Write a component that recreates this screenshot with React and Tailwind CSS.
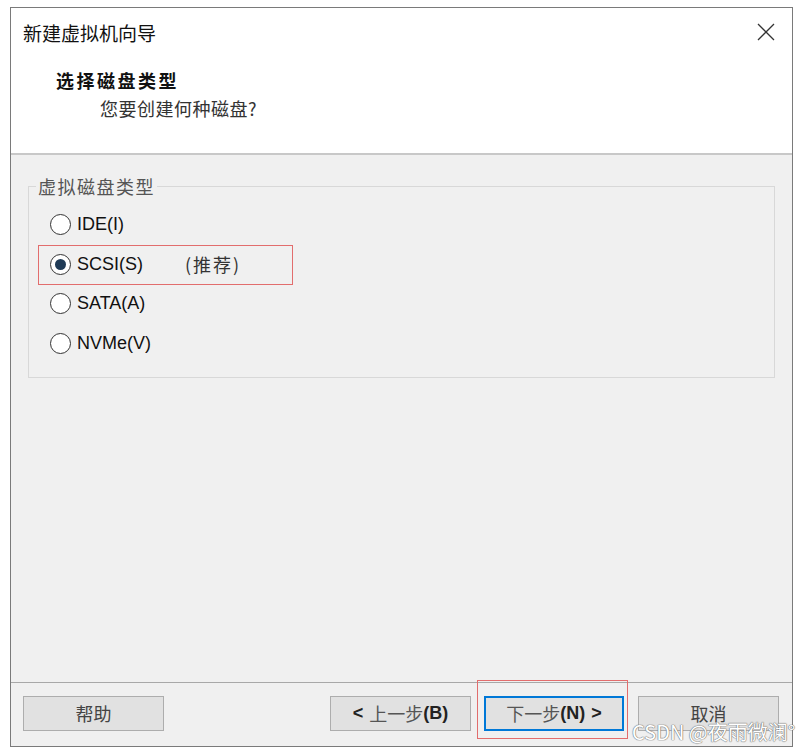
const cjk = "font-['Noto_Sans_CJK_SC',sans-serif]";
const latin = "font-['Liberation_Sans','Noto_Sans_CJK_SC',sans-serif]";

const options = [
  { id: 'ide', label: 'IDE(I)' },
  { id: 'scsi', label: 'SCSI(S)', note: '(推荐)' },
  { id: 'sata', label: 'SATA(A)' },
  { id: 'nvme', label: 'NVMe(V)' },
];

const Radio = ({ checked }) => (
  <span className="w-[21px] h-[21px] rounded-full border border-[#333] bg-white flex items-center justify-center shrink-0">
    {checked && <span className="w-[11px] h-[11px] rounded-full bg-[#1f3a56]" />}
  </span>
);

const Button = ({ children, active, className = '' }) => (
  <button
    className={`h-[35px] flex items-center justify-center bg-[#e1e1e1] text-[18px] text-[#222] ${
      active ? 'border-2 border-[#0078d7]' : 'border border-[#adadad]'
    } ${className}`}
  >
    {children}
  </button>
);

export default function App() {
  const selected = 'scsi';

  return (
    <div className="w-[801px] h-[752px] bg-white pt-[7px] pl-[10px] relative">
      <div className="w-[783px] h-[740px] border border-[#7a7a7a] bg-[#f0f0f0] flex flex-col">
        {/* Header */}
        <div className="h-[147px] bg-white border-b-2 border-[#c8c8c8] shrink-0">
          <div className="h-[48px] flex items-center justify-between pl-[12px] pr-[17px]">
            <span className={`${cjk} text-[19px] text-[#111] leading-none`}>新建虚拟机向导</span>
            <svg width="18" height="18" viewBox="0 0 18 18">
              <path d="M1 1 L17 17 M17 1 L1 17" stroke="#333" strokeWidth="1.3" fill="none" />
            </svg>
          </div>
          <div className={`${cjk} pl-[45px] mt-[15px] text-[18px] font-bold text-[#111] leading-none tracking-[2.5px]`}>
            选择磁盘类型
          </div>
          <div className={`${cjk} pl-[89px] mt-[10px] text-[18px] text-[#333] leading-none tracking-[0.5px]`}>
            您要创建何种磁盘?
          </div>
        </div>

        {/* Body */}
        <div className="flex-1 pl-[17px] pt-[31px]">
          <div className="relative w-[747px] h-[192px] border border-[#d8d8d8] pt-[18px] pl-[21px]">
            <span className={`${cjk} absolute left-[7px] top-[-12px] bg-[#f0f0f0] px-[2px] text-[18px] leading-[22px] text-[#555] tracking-[1.5px]`}>
              虚拟磁盘类型
            </span>
            {options.map((o) => (
              <div key={o.id} className="h-[39.5px] flex items-center gap-[6px]">
                <Radio checked={o.id === selected} />
                <span className={`${latin} text-[18px] text-[#111]`}>{o.label}</span>
                {o.note && (
                  <span className={`${cjk} ml-[36px] text-[18px] text-[#333] tracking-[2px]`}>{o.note}</span>
                )}
              </div>
            ))}
            <div className="absolute left-[9px] top-[58px] w-[255px] h-[40px] border border-[#e26d6d]" />
          </div>
        </div>

        {/* Footer */}
        <div className="h-[64px] border-t border-[#a8a8a8] shrink-0 flex items-center pl-[12px] pr-[13px] pb-[2px]">
          <Button className={`${cjk} w-[141px] text-[#444]`}>帮助</Button>
          <div className="flex-1" />
          <Button className={`${cjk} w-[141px] gap-[6px]`}>
            <span className={`${latin} font-bold`}>&lt;</span>
            <span className="text-[#555]">上一步</span>
            <span className={`${latin} font-bold -ml-[6px]`}>(B)</span>
          </Button>
          <div className="relative ml-[13px]">
            <Button active className={`${cjk} w-[140px] gap-[6px]`}>
              <span className="text-[#555]">下一步</span>
              <span className={`${latin} font-bold -ml-[6px]`}>(N)</span>
              <span className={`${latin} font-bold`}>&gt;</span>
            </Button>
            <div className="absolute -left-[7px] -top-[16px] w-[151px] h-[59px] border border-[#e26d6d]" />
          </div>
          <Button className={`${cjk} w-[141px] ml-[14px] text-[#444]`}>取消</Button>
        </div>
      </div>
      <span
        className={`${cjk} absolute left-[632px] top-[722px] text-[20px] text-white leading-none [text-shadow:0_0_1px_#777,0_0_1px_#777,0_0_1px_#777]`}
      >
        CSDN @夜雨微澜°
      </span>
    </div>
  );
}
